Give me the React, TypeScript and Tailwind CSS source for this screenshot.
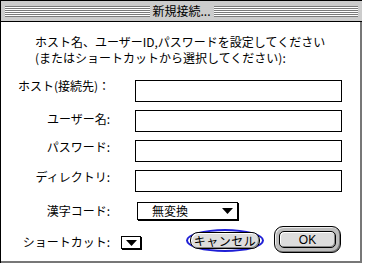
const Tri = ({ w = 11, h = 6 }: { w?: number; h?: number }) => (
  <svg width={w} height={h} viewBox={`0 0 ${w} ${h}`}>
    <polygon points={`0,0 ${w},0 ${w / 2},${h}`} fill="#000" />
  </svg>
);

const Stripes = () => (
  <div className="flex-1 h-[11px] bg-[repeating-linear-gradient(to_bottom,#7a7a7a_0px,#7a7a7a_1px,#ffffff_1px,#ffffff_2px)]" />
);

const rows = [
  { label: "ホスト(接続先)：", mt: "mt-[-2px]" },
  { label: "ユーザー名:", mt: "mt-[1px]" },
  { label: "パスワード:", mt: "mt-[-1px]" },
  { label: "ディレクトリ:", mt: "mt-[-1px]" },
];

export default function App() {
  return (
    <div className="w-[365px] h-[266px] bg-white [font-family:'Noto_Sans_CJK_JP',sans-serif] text-[12px] text-black">
      <div className="w-[362px] h-[263px] flex flex-col border-l border-t border-black">
        <div className="h-[21px] bg-[#cccccc] border-b border-black flex items-center px-[4px]">
          <Stripes />
          <div className="px-[3px] leading-[16px]">新規接続...</div>
          <Stripes />
        </div>
        <div className="flex-1 bg-white border-r-2 border-b-2 border-[#777777] flex flex-col">
          <div className="pl-[34px] pt-[12px] leading-[16px]">
            <div>ホスト名、ユーザーID,パスワードを設定してください</div>
            <div>(またはショートカットから選択してください):</div>
          </div>
          <div className="mt-[14px] flex flex-col gap-[8px]">
            {rows.map((r) => (
              <div key={r.label} className="flex items-start">
                <div className={`w-[109px] text-right leading-[16px] ${r.mt}`}>{r.label}</div>
                <div className="ml-[25px] w-[207px] h-[22px] border border-black bg-white" />
              </div>
            ))}
          </div>
          <div className="mt-[10px] flex items-start">
            <div className="w-[109px] text-right leading-[16px] mt-[1px]">漢字コード:</div>
            <div className="ml-[27px] w-[101px] h-[18px] border border-black shadow-[1px_1px_0_#000] bg-white flex items-center justify-between pl-[14px] pr-[4px] leading-[16px]">
              <span>無変換</span>
              <Tri />
            </div>
          </div>
          <div className="mt-[6px] flex items-start">
            <div className="w-[109px] text-right leading-[16px] mt-[8px]">ショートカット:</div>
            <div className="ml-[11px] mt-[10px] w-[20px] h-[13px] border border-black shadow-[1px_1px_0_#000] bg-white flex items-center justify-center">
              <Tri w={11} h={6} />
            </div>
            <div className="ml-[45px] mt-[3px] w-[78px] h-[23px] rounded-[50%] border-[2px] border-[#1f1fd6] flex items-center justify-center">
              <div className="w-[70px] h-[17px] rounded-[8px] border border-black bg-[#dddddd] shadow-[inset_1px_1px_0_#ffffff,inset_-1px_-1px_0_#888888] flex items-center justify-center leading-[14px] tracking-[0.5px]">
                キャンセル
              </div>
            </div>
            <div className="ml-[10px] w-[67px] h-[27px] rounded-[9px] border border-black bg-[#bdbdbd] shadow-[inset_1px_1px_0_#eeeeee,inset_-1px_-1px_0_#777777] p-[4px] flex">
              <div className="flex-1 rounded-[5px] border border-black bg-[#dddddd] shadow-[inset_1px_1px_0_#ffffff,inset_-1px_-1px_0_#888888] flex items-center justify-center leading-[14px] [font-family:'Liberation_Sans',sans-serif]">
                OK
              </div>
            </div>
          </div>
        </div>
      </div>
    </div>
  );
}
